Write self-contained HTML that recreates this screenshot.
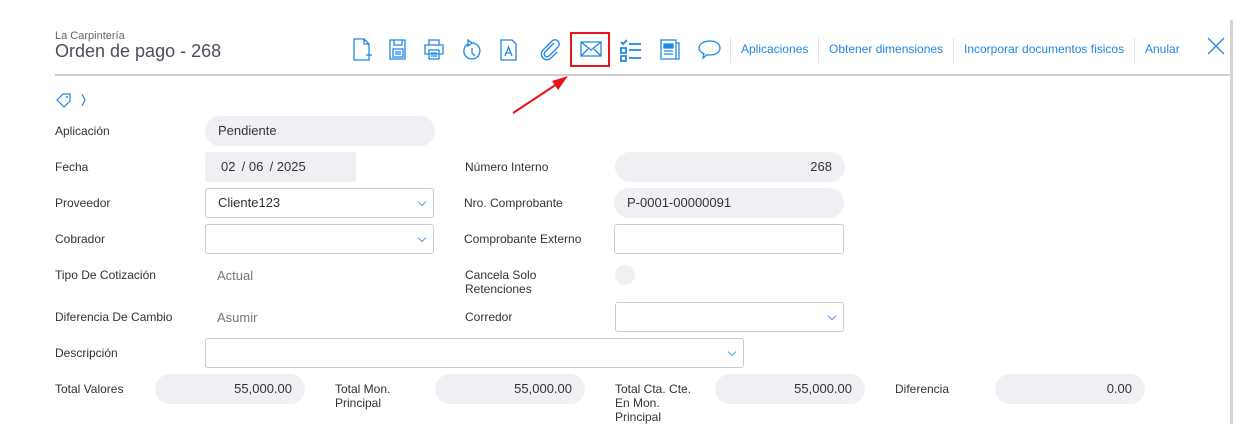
<!DOCTYPE html>
<html><head><meta charset="utf-8"><style>
body{margin:0;width:1238px;height:424px;background:#fff;font-family:"Liberation Sans",sans-serif;position:relative;overflow:hidden;color:#333}
.a{position:absolute}
.l{position:absolute;font-size:12px;color:#333;line-height:14px}
.pill{position:absolute;background:#eef0f3;border-radius:15px;height:30px;font-size:13px;line-height:30px;box-sizing:border-box;padding:0 13px}
.sel{position:absolute;border:1px solid #c8cbd0;border-radius:3px;height:30px;box-sizing:border-box;font-size:13px;line-height:28px;padding:0 12px}
.sel.d:after{content:"";position:absolute;right:8px;top:10px;width:5px;height:5px;border-right:1.3px solid #5a9ee0;border-bottom:1.3px solid #5a9ee0;transform:rotate(45deg)}
.lk{position:absolute;top:42px;font-size:12px;color:#1e88e5}
.sep{position:absolute;top:38px;width:1px;height:25px;background:#e2e4e8}
svg.i{position:absolute;top:38px;fill:none;stroke:#1e88e5;stroke-width:1.3}
</style></head><body>
<div class="a" style="left:55px;top:30px;font-size:11px;color:#666">La Carpintería</div>
<div class="a" style="left:55px;top:41px;font-size:18px;color:#4a4f5a">Orden de pago - 268</div>
<div class="a" style="left:55px;top:74px;width:1175px;height:2px;background:#cfd0d4"></div>
<div class="a" style="left:1230px;top:20px;width:3px;height:404px;background:#d4d4d4"></div>

<svg class="i" style="left:352px" width="22" height="24"><path d="M2 1h10l5 5v16H2z M12 1v5h5 M14 17h6 M17 14v6"/></svg>
<svg class="i" style="left:388px" width="20" height="24"><path d="M2 2h15v19H2z M6 2v5h8V2 M5 11h10v8H5z M7 14h6 M7 16h6"/></svg>
<svg class="i" style="left:423px" width="22" height="24"><path d="M6 2h10v5H6z M2 7h18v9H2z M6 12h10v9H6z M8 15h6 M8 18h6"/></svg>
<svg class="i" style="left:460px" width="22" height="24"><path d="M8 6a8 8 0 1 0 4-1 M12 5l-4-3v6z M12 10v5l3 3"/></svg>
<svg class="i" style="left:500px" width="18" height="24"><path d="M1 2h11l4 4v16H1z M5 18l3.5-9 3.5 9 M6 15h5"/></svg>
<svg class="i" style="left:539px" width="22" height="24"><path d="M15 5l-9 9a2.5 2.5 0 0 0 4 4l9-9a4 4 0 0 0-6-6l-9 9a5.5 5.5 0 0 0 8 8l6-6"/></svg>
<svg class="i" style="left:580px;top:41px" width="22" height="16"><path d="M1 1h20v14H1z M1 1l10 8 10-8 M1 15l7-7 M21 15l-7-7"/></svg>
<div class="a" style="left:570px;top:32px;width:36px;height:31px;border:2px solid #e8141a"></div>
<svg class="i" style="left:619px" width="24" height="24"><path d="M2 4l2 2 4-4 M2 10h5v5H2z M2 18h5v5H2z M10 6h12 M10 12h12 M10 20h12" stroke-width="1.8"/></svg>
<svg class="i" style="left:659px" width="22" height="24"><path d="M2 2h15v19H2z M17 5h3v16h-3" /><path d="M5 6h9v4H5z" fill="#1e88e5"/><path d="M5 13h9 M5 16h9"/></svg>
<svg class="i" style="left:698px" width="24" height="24"><path d="M12 3c6 0 10 3 10 7s-4 7-10 7c-1 0-2 0-3-.3L5 20l1-4c-3-1.5-5-3.5-5-6 0-4 5-7 11-7z"/></svg>

<div class="sep" style="left:730px"></div><div class="sep" style="left:818px"></div><div class="sep" style="left:953px"></div><div class="sep" style="left:1134px"></div>
<div class="lk" style="left:741px">Aplicaciones</div>
<div class="lk" style="left:829px">Obtener dimensiones</div>
<div class="lk" style="left:964px">Incorporar documentos fisicos</div>
<div class="lk" style="left:1145px">Anular</div>
<svg class="a" style="left:1207px;top:37px" width="18" height="18"><path d="M1 1l16 16M17 1L1 17" stroke="#1e88e5" stroke-width="1.3"/></svg>

<svg class="a" style="left:505px;top:70px" width="70" height="50"><path d="M8 43L52 14" stroke="#e8141a" stroke-width="2"/><path d="M63 6L47 11l6 9z" fill="#e8141a"/></svg>

<svg class="a" style="left:55px;top:92px" width="40" height="16"><path d="M2 8l6-6h7v7l-6 6z" fill="none" stroke="#1e88e5" stroke-width="1.2"/><circle cx="12" cy="5" r="1" fill="#1e88e5"/><path d="M27 2l3 6-3 6" fill="none" stroke="#1e88e5" stroke-width="1.2"/></svg>

<div class="l" style="left:55px;top:124px">Aplicación</div>
<div class="pill" style="left:205px;top:116px;width:230px">Pendiente</div>
<div class="l" style="left:55px;top:160px">Fecha</div>
<div class="pill" style="left:205px;top:152px;width:151px;border-radius:3px;padding-left:16px">02 &thinsp;/ 06 &thinsp;/ 2025</div>
<div class="l" style="left:55px;top:196px">Proveedor</div>
<div class="sel d" style="left:205px;top:188px;width:229px">Cliente123</div>
<div class="l" style="left:55px;top:232px">Cobrador</div>
<div class="sel d" style="left:205px;top:224px;width:229px"></div>
<div class="l" style="left:55px;top:268px">Tipo De Cotización</div>
<div class="l" style="left:217px;top:269px;font-size:13px;color:#777">Actual</div>
<div class="l" style="left:55px;top:310px">Diferencia De Cambio</div>
<div class="l" style="left:217px;top:311px;font-size:13px;color:#777">Asumir</div>
<div class="l" style="left:55px;top:346px">Descripción</div>
<div class="sel d" style="left:205px;top:338px;width:539px"></div>

<div class="l" style="left:465px;top:160px">Número Interno</div>
<div class="pill" style="left:615px;top:152px;width:230px;text-align:right">268</div>
<div class="l" style="left:464px;top:196px">Nro. Comprobante</div>
<div class="pill" style="left:614px;top:188px;width:230px">P-0001-00000091</div>
<div class="l" style="left:464px;top:232px">Comprobante Externo</div>
<div class="sel" style="left:614px;top:224px;width:230px"></div>
<div class="l" style="left:465px;top:268px">Cancela Solo<br>Retenciones</div>
<div class="a" style="left:615px;top:265px;width:20px;height:20px;border-radius:50%;background:#eef0f3"></div>
<div class="l" style="left:465px;top:310px">Corredor</div>
<div class="sel d" style="left:615px;top:302px;width:229px"></div>

<div class="l" style="left:55px;top:382px">Total Valores</div>
<div class="pill" style="left:155px;top:374px;width:150px;text-align:right">55,000.00</div>
<div class="l" style="left:335px;top:382px">Total Mon.<br>Principal</div>
<div class="pill" style="left:435px;top:374px;width:150px;text-align:right">55,000.00</div>
<div class="l" style="left:615px;top:382px">Total Cta. Cte.<br>En Mon.<br>Principal</div>
<div class="pill" style="left:715px;top:374px;width:150px;text-align:right">55,000.00</div>
<div class="l" style="left:895px;top:382px">Diferencia</div>
<div class="pill" style="left:995px;top:374px;width:150px;text-align:right">0.00</div>
</body></html>
